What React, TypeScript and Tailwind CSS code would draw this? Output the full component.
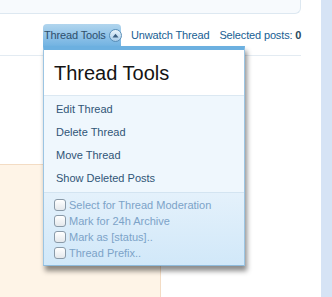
const links = ["Edit Thread", "Delete Thread", "Move Thread", "Show Deleted Posts"];
const checks = ["Select for Thread Moderation", "Mark for 24h Archive", "Mark as [status]..", "Thread Prefix.."];

const App = () => {
  return (
    <div className="relative flex w-[332px] h-[297px] overflow-hidden bg-white font-['Liberation_Sans',Arial,sans-serif]">
      {/* page column */}
      <div className="flex flex-col w-[321px]">
        {/* top panel */}
        <div className="h-[14px] w-[301px] bg-[#f7fafd] border-b border-r border-[#dde8f1] rounded-br-[6px]" />

        {/* thread controls */}
        <div className="flex items-center h-[22px] mt-[10px] pl-[43px] text-[11px] tracking-[-0.15px] whitespace-nowrap text-[#176093]">
          <div className="flex shrink-0 items-center gap-[3px] h-full w-[78px] pl-[1px] rounded-t-[4px] bg-gradient-to-b from-[#b1d5ee] to-[#72b3e2] text-[#2d4f6c]">
            <span>Thread Tools</span>
            <span className="flex shrink-0 items-center justify-center w-[13px] h-[13px] rounded-full border border-[#5a8fb8] bg-gradient-to-b from-[#eaf4fb] to-[#a9cde9]">
              <svg width="7" height="5" viewBox="0 0 7 5">
                <path d="M0.5 4.5 L3.5 0.8 L6.5 4.5 Z" fill="#3c5f80" />
              </svg>
            </span>
          </div>
          <span className="ml-[10px]">Unwatch Thread</span>
          <span className="ml-[10px]">
            Selected posts: <b className="text-[#2b485c]">0</b>
          </span>
        </div>

        <div className="mt-[9px] w-[301px] border-t border-[#e3ebf2]" />

        {/* peach content box */}
        <div className="mt-[108px] flex-1 w-[161px] bg-[#fef4e7] border-t border-r border-[#f3dcc4]" />
      </div>

      {/* right page edge */}
      <div className="flex-1 bg-[#d6e3f5]" />

      {/* dropdown menu */}
      <div className="absolute left-[43px] top-[46px] w-[202px] flex flex-col border-t-[4px] border-t-[#6cb0e0] border-x border-b border-x-[#9cc5e3] border-b-[#8fbbdc] shadow-[2px_5px_5px_rgba(0,0,0,0.45)]">
        <div className="h-[46px] bg-white flex items-center px-[10px] text-[20px] text-[#141414] border-b border-[#dbe8f2]">
          Thread Tools
        </div>
        <div className="flex flex-col py-[2px] bg-[#eff7fd] border-b border-[#d3e4f1]">
          {links.map((l) => (
            <div key={l} className="h-[23px] flex items-center px-[12px] text-[11px] text-[#2f5577]">
              {l}
            </div>
          ))}
        </div>
        <div className="flex flex-col pt-[4px] pb-[4px] bg-gradient-to-b from-[#e4f1fb] to-[#d1e8f9]">
          {checks.map((c) => (
            <div key={c} className="h-[16px] flex items-center gap-[3px] pl-[10px] text-[11px] text-[#7ca3c8]">
              <span className="w-[12px] h-[12px] rounded-[3px] border border-[#8a9aa8] bg-gradient-to-b from-white to-[#e4e8ec]" />
              <span>{c}</span>
            </div>
          ))}
        </div>
      </div>
    </div>
  );
};

export default App;
